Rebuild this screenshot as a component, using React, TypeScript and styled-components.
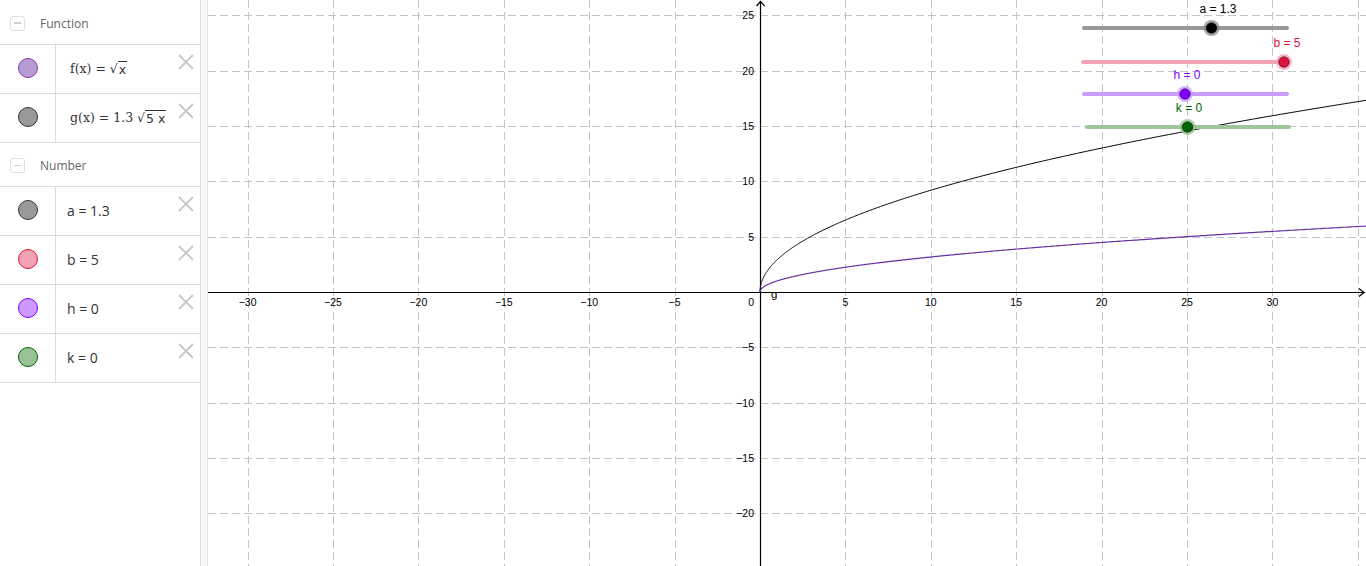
import React from "react";
import styled, { createGlobalStyle } from "styled-components";

const Global = createGlobalStyle`
  html, body { margin: 0; padding: 0; background: #fff; }
  body { font-family: "Open Sans", "Liberation Sans", sans-serif; overflow: hidden; }
`;

const Page = styled.div`
  display: flex;
  width: 1366px;
  height: 566px;
  overflow: hidden;
`;

const Panel = styled.div`
  width: 200px;
  flex: 0 0 200px;
  border-right: 1px solid #dcdcdc;
  background: #fff;
  display: flex;
  flex-direction: column;
`;

const Splitter = styled.div`
  width: 6px;
  flex: 0 0 6px;
  background: #f7f7f7;
  border-right: 1px solid #e4e4e4;
`;

const GraphArea = styled.div`
  flex: 1;
  height: 566px;
  position: relative;
`;

const GroupHeader = styled.div<{ $h: number }>`
  height: ${(p) => p.$h}px;
  display: flex;
  align-items: center;
  gap: 15px;
  padding-left: 10px;
  padding-top: 2px;
  border-bottom: 1px solid #dcdcdc;
  box-sizing: border-box;
  color: #666;
  font-size: 12px;
`;

const Collapse = styled.div`
  width: 13px;
  height: 13px;
  border: 1px solid #e0e0e0;
  border-radius: 3px;
  display: flex;
  align-items: center;
  justify-content: center;
  &::after {
    content: "";
    width: 7px;
    height: 1.5px;
    background: #cfcfcf;
  }
`;

const Row = styled.div`
  height: 49px;
  display: flex;
  border-bottom: 1px solid #dcdcdc;
  box-sizing: border-box;
  position: relative;
`;

const Marble = styled.div`
  width: 56px;
  flex: 0 0 56px;
  border-right: 1px solid #dcdcdc;
  display: flex;
  align-items: center;
  justify-content: center;
  padding-bottom: 3px;
  box-sizing: border-box;
`;

const Dot = styled.div<{ $fill: string; $stroke: string }>`
  width: 18px;
  height: 18px;
  border-radius: 50%;
  background: ${(p) => p.$fill};
  border: 1px solid ${(p) => p.$stroke};
`;

const Content = styled.div<{ $math?: boolean }>`
  flex: 1;
  display: flex;
  align-items: center;
  padding-left: ${(p) => (p.$math ? "14px" : "11px")};
  padding-bottom: 1px;
  font-family: ${(p) =>
    p.$math ? '"DejaVu Serif", "Liberation Serif", serif' : '"Open Sans", "Liberation Sans", sans-serif'};
  font-size: ${(p) => (p.$math ? "12.5px" : "14px")};
  color: #333;
  white-space: pre;
`;

const Radicand = styled.span`
  border-top: 1px solid #333;
  padding: 0 1px;
  font-family: "DejaVu Sans", sans-serif;
`;

const Root = styled.span`
  font-family: "DejaVu Sans", sans-serif;
  font-size: 12.5px;
`;

const Close = styled.div`
  position: absolute;
  right: 6px;
  top: 8px;
  width: 16px;
  height: 16px;
`;

const CloseIcon = () => (
  <Close>
    <svg width="16" height="16" viewBox="0 0 16 16">
      <path d="M1 1 L15 15 M15 1 L1 15" stroke="#c8c8c8" strokeWidth="1.8" />
    </svg>
  </Close>
);

const Canvas = styled.svg`
  display: block;
  width: 100%;
  height: 100%;
`;

const OX = 760;
const OY = 292;
const SX = 17.08;
const SY = 11.07;
const px = (x: number) => OX + x * SX;
const py = (y: number) => OY - y * SY;

const curve = (fn: (x: number) => number) => {
  const pts: string[] = [];
  for (let i = 0; i <= 400; i++) {
    const x = Math.pow(i / 400, 2) * 36;
    pts.push(`${px(x).toFixed(2)},${py(fn(x)).toFixed(2)}`);
  }
  return "M" + pts.join(" L");
};

const fmt = (n: number) => (n < 0 ? "\u2212" + Math.abs(n) : String(n));

type Slider = {
  x1: number;
  x2: number;
  y: number;
  px: number;
  line: string;
  dot: string;
  halo: string;
  label: string;
  lx: number;
  ly: number;
  lc: string;
};

const sliders: Slider[] = [
  { x1: 1084, x2: 1287, y: 28, px: 1211.5, line: "#999999", dot: "#000000", halo: "#888888", label: "a = 1.3", lx: 1218, ly: 13, lc: "#000" },
  { x1: 1083, x2: 1284, y: 62, px: 1284, line: "#f2a3b3", dot: "#dc143c", halo: "#f2a3b3", label: "b = 5", lx: 1287, ly: 47, lc: "#dc143c" },
  { x1: 1084, x2: 1287, y: 94, px: 1185, line: "#cc99ff", dot: "#7f00ff", halo: "#cc99ff", label: "h = 0", lx: 1187, ly: 79, lc: "#7f00ff" },
  { x1: 1087, x2: 1289, y: 127, px: 1187.5, line: "#9cc79c", dot: "#006400", halo: "#8fbf8f", label: "k = 0", lx: 1189, ly: 112, lc: "#006400" },
];

const Graph = () => {
  const vx: number[] = [];
  for (let k = -6; k <= 7; k++) if (k !== 0) vx.push(k * 5);
  const hy: number[] = [];
  for (let k = -4; k <= 5; k++) if (k !== 0) hy.push(k * 5);
  return (
    <Canvas viewBox="208 0 1158 566" preserveAspectRatio="none">
      <g stroke="#c4c4c4" strokeWidth="1" strokeDasharray="8 4" shapeRendering="crispEdges">
        {vx.map((v) => (
          <line key={"v" + v} x1={Math.round(px(v)) + 0.5} y1={0} x2={Math.round(px(v)) + 0.5} y2={566} />
        ))}
        {hy.map((v) => (
          <line key={"h" + v} x1={208} y1={Math.round(py(v)) + 0.5} x2={1366} y2={Math.round(py(v)) + 0.5} />
        ))}
      </g>
      <g stroke="#000" strokeWidth="1.2" fill="none">
        <line x1={208} y1={OY + 0.5} x2={1365} y2={OY + 0.5} />
        <line x1={OX + 0.5} y1={1} x2={OX + 0.5} y2={566} />
        <path d={`M${OX - 3.5} 6 L${OX + 0.5} 1.5 L${OX + 4.5} 6`} />
        <path d={`M1359 ${OY - 3.5} L1364 ${OY + 0.5} L1359 ${OY + 4.5}`} />
      </g>
      <g fontFamily='"Liberation Sans", Arial, sans-serif' fontSize="10.5" fill="#000">
        {vx
          .filter((v) => v < 35)
          .map((v) => (
            <text key={"tx" + v} x={px(v)} y={306} textAnchor="middle">
              {fmt(v)}
            </text>
          ))}
        {hy.map((v) => (
          <text key={"ty" + v} x={754} y={py(v) + 4} textAnchor="end">
            {fmt(v)}
          </text>
        ))}
        <text x={754} y={306} textAnchor="end">0</text>
        <text x={771} y={298} fontSize="11.5">g</text>
      </g>
      <path d={curve((x) => 1.3 * Math.sqrt(5 * x))} stroke="#000" strokeWidth="1" fill="none" />
      <path d={curve((x) => Math.sqrt(x))} stroke="#6a2fa3" strokeWidth="1.2" fill="none" />
      {sliders.map((s) => (
        <g key={s.label}>
          <line x1={s.x1} y1={s.y} x2={s.x2} y2={s.y} stroke={s.line} strokeWidth="4" strokeLinecap="round" />
          <circle cx={s.px} cy={s.y} r={8} fill={s.halo} opacity={0.75} />
          <circle cx={s.px} cy={s.y} r={5.3} fill={s.dot} stroke="#000" strokeWidth="0.8" strokeOpacity={0.6} />
          <text
            x={s.lx}
            y={s.ly}
            textAnchor="middle"
            fontFamily='"Liberation Sans", Arial, sans-serif'
            fontSize="12"
            fill={s.lc}
          >
            {s.label}
          </text>
        </g>
      ))}
    </Canvas>
  );
};

type Item = { fill: string; stroke: string; node: React.ReactNode; math?: boolean };

const functions: Item[] = [
  {
    fill: "#b99bd3",
    stroke: "#7b3fa8",
    math: true,
    node: (
      <>
        {"f(x) = "}
        <Root>√</Root>
        <Radicand>x</Radicand>
      </>
    ),
  },
  {
    fill: "#999999",
    stroke: "#333333",
    math: true,
    node: (
      <>
        {"g(x) = 1.3 "}
        <Root>√</Root>
        <Radicand>5 x</Radicand>
      </>
    ),
  },
];

const numbers: Item[] = [
  { fill: "#999999", stroke: "#333333", node: "a = 1.3" },
  { fill: "#f2a3b3", stroke: "#dc143c", node: "b = 5" },
  { fill: "#cc99ff", stroke: "#7f00ff", node: "h = 0" },
  { fill: "#99c299", stroke: "#006400", node: "k = 0" },
];

const renderRows = (items: Item[]) =>
  items.map((it, i) => (
    <Row key={i}>
      <Marble>
        <Dot $fill={it.fill} $stroke={it.stroke} />
      </Marble>
      <Content $math={it.math}>{it.node}</Content>
      <CloseIcon />
    </Row>
  ));

export default function App() {
  return (
    <>
      <Global />
      <Page>
        <Panel>
          <GroupHeader $h={45}>
            <Collapse />
            Function
          </GroupHeader>
          {renderRows(functions)}
          <GroupHeader $h={44}>
            <Collapse />
            Number
          </GroupHeader>
          {renderRows(numbers)}
        </Panel>
        <Splitter />
        <GraphArea>
          <Graph />
        </GraphArea>
      </Page>
    </>
  );
}
